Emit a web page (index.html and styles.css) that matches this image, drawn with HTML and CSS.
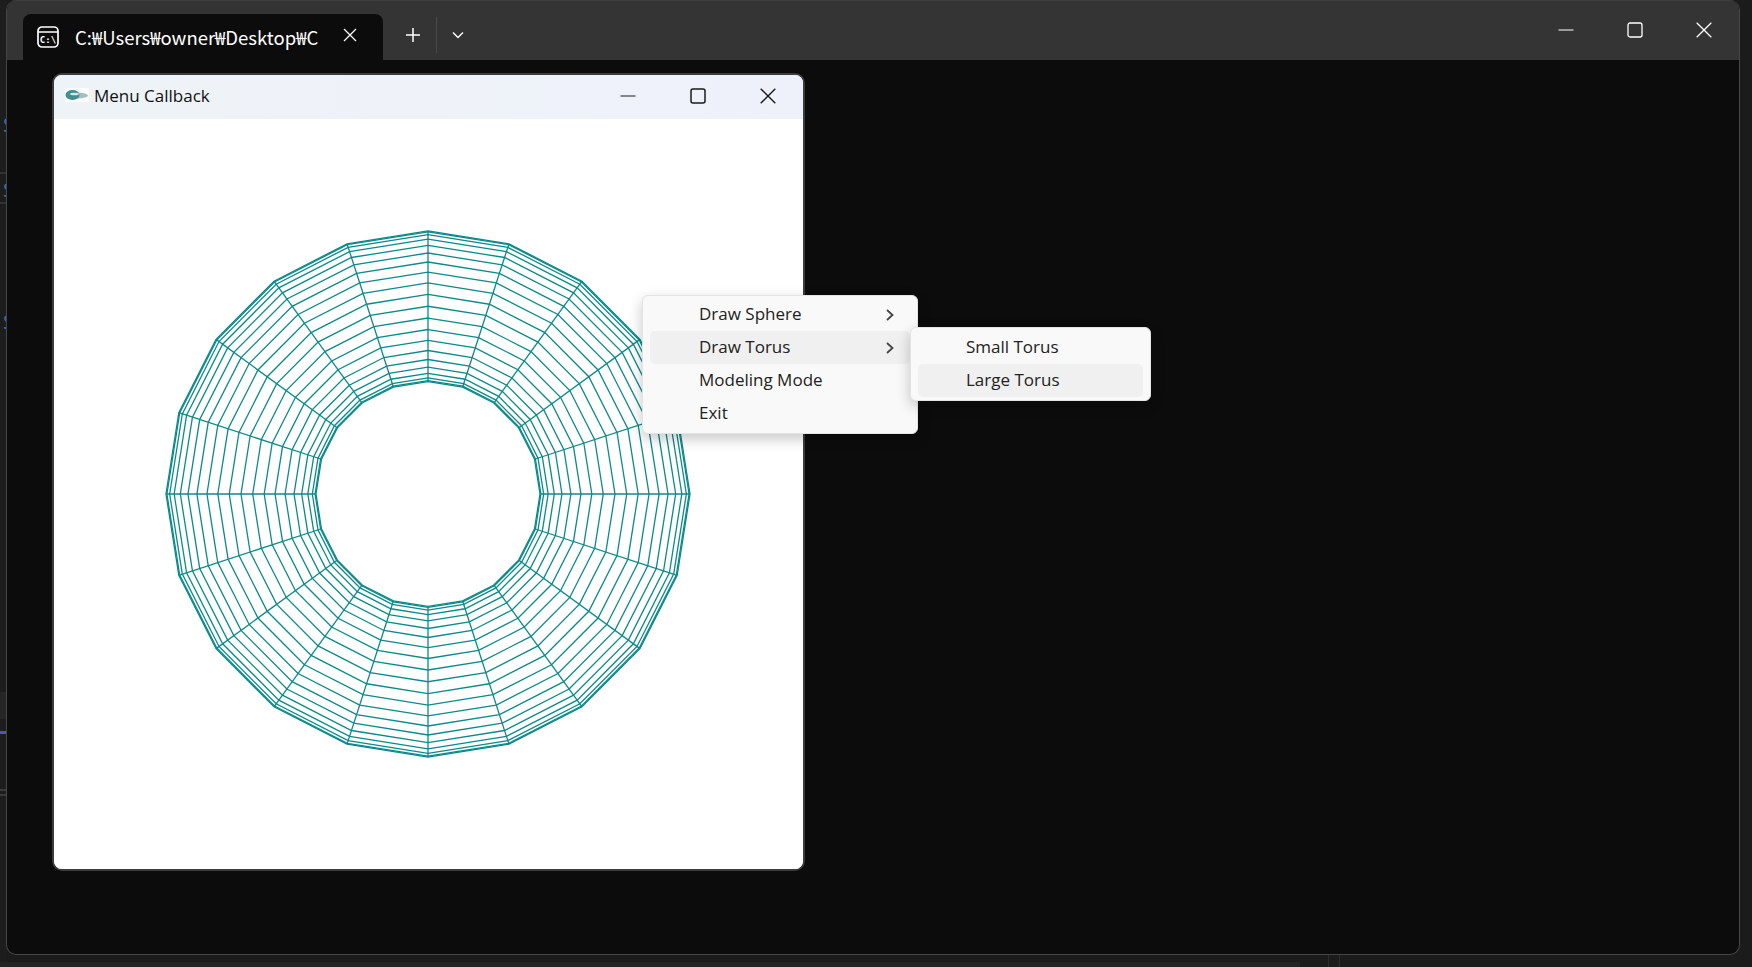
FILE: index.html
```html
<!DOCTYPE html>
<html lang="en">
<head>
<meta charset="utf-8">
<title>Menu Callback</title>
<link rel="stylesheet" href="styles.css">
</head>
<body>
<div class="desktop">
  <div class="strip">
    <span class="strip-s s1">S</span>
    <span class="strip-s s2">S</span>
    <span class="strip-s s3">S</span>
    <i class="band b1"></i><i class="band b2"></i><i class="band b3"></i>
    <i class="band b4"></i><i class="band b5"></i><i class="band b6"></i>
  </div>
  <div class="floor"><i class="floor-block"></i><i class="floor-line l1"></i><i class="floor-line l2"></i></div>

  <section class="terminal">
    <header class="term-bar">
      <div class="tab">
        <svg class="tab-icon" viewBox="0 0 22 22" width="22" height="22">
          <rect x="1" y="1" width="20" height="20" rx="4" fill="none" stroke="#fff" stroke-width="1.700"/>
          <path d="M1 6h20" stroke="#fff" stroke-width="1.700"/>
          <text x="11" y="17" class="tab-icon-text" text-anchor="middle">C:\</text>
        </svg>
        <span class="tab-title">C:₩Users₩owner₩Desktop₩C</span>
        <svg class="tab-close" viewBox="0 0 14 14" width="14" height="14"><path d="M1 1l12 12M13 1L1 13" stroke="#fff" stroke-width="1.300" fill="none"/></svg>
      </div>
      <div class="tab-actions">
        <svg viewBox="0 0 16 16" width="16" height="16"><path d="M8 1v14M1 8h14" stroke="#fff" stroke-width="1.500" fill="none"/></svg>
        <i class="tab-sep"></i>
        <svg viewBox="0 0 12 8" width="12" height="8"><path d="M1 1.500l5 5 5-5" stroke="#fff" stroke-width="1.400" fill="none"/></svg>
      </div>
      <div class="controls">
        <span class="ctl"><svg viewBox="0 0 16 16" width="16" height="16"><path d="M0.500 8h15" stroke="#fff" stroke-width="1.200" fill="none"/></svg></span>
        <span class="ctl"><svg viewBox="0 0 16 16" width="16" height="16"><rect x="1" y="1" width="14" height="14" rx="2" stroke="#fff" stroke-width="1.300" fill="none"/></svg></span>
        <span class="ctl"><svg viewBox="0 0 16 16" width="16" height="16"><path d="M0.700 0.700l14.600 14.600M15.300 0.700L0.700 15.300" stroke="#fff" stroke-width="1.300" fill="none"/></svg></span>
      </div>
    </header>
  </section>

  <section class="glut">
    <header class="glut-bar">
      <svg class="glut-icon" viewBox="0 0 24 14" width="24" height="14">
        <rect width="24" height="14" fill="#fbfcfc"/>
        <ellipse cx="13" cy="7.500" rx="10" ry="3" fill="#a9bcc0"/>
        <ellipse cx="7.500" cy="7" rx="7" ry="5" fill="#3f8f92"/>
        <ellipse cx="9.500" cy="6" rx="4.500" ry="1.300" fill="#d5e6e6"/>
      </svg>
      <span class="glut-title">Menu Callback</span>
      <div class="controls">
        <span class="ctl"><svg viewBox="0 0 16 16" width="16" height="16"><path d="M0.500 8h15" stroke="#1a1a1a" stroke-width="1.200" fill="none"/></svg></span>
        <span class="ctl"><svg viewBox="0 0 16 16" width="16" height="16"><rect x="1" y="1" width="14" height="14" rx="2" stroke="#1a1a1a" stroke-width="1.500" fill="none"/></svg></span>
        <span class="ctl"><svg viewBox="0 0 16 16" width="16" height="16"><path d="M0.700 0.700l14.600 14.600M15.300 0.700L0.700 15.300" stroke="#1a1a1a" stroke-width="1.400" fill="none"/></svg></span>
      </div>
    </header>
    <div class="glut-body">
      <svg id="torus" class="torus" viewBox="0 0 749 750" width="749" height="750"></svg>
    </div>
  </section>

  <nav class="menu menu-main">
    <div class="row"><span>Draw Sphere</span><svg class="chev" viewBox="0 0 8 12" width="8" height="12"><path d="M1 1l5.500 5L1 11" stroke="#444" stroke-width="1.800" fill="none"/></svg></div>
    <div class="row hot"><span>Draw Torus</span><svg class="chev" viewBox="0 0 8 12" width="8" height="12"><path d="M1 1l5.500 5L1 11" stroke="#444" stroke-width="1.800" fill="none"/></svg></div>
    <div class="row"><span>Modeling Mode</span></div>
    <div class="row"><span>Exit</span></div>
  </nav>
  <nav class="menu menu-sub">
    <div class="row"><span>Small Torus</span></div>
    <div class="row hot"><span>Large Torus</span></div>
  </nav>
</div>
<script src="script.js"></script>
</body>
</html>
```

FILE: styles.css
```css
* { box-sizing: border-box; }
html, body { margin: 0; height: 100%; overflow: hidden; background: #1b1b1b; }
.desktop { position: relative; width: 1752px; height: 967px; overflow: hidden; background: #1b1b1b; font-family: "Open Sans", "Noto Sans", sans-serif; }

.strip { position: absolute; left: 0; top: 0; width: 7px; height: 967px; overflow: hidden; background: #1d1d1d; }
.strip-s { position: absolute; left: 3px; font: 20px "Open Sans", sans-serif; color: #3f6c9c; line-height: 20px; }
.s1 { top: 115px; } .s2 { top: 180px; } .s3 { top: 312px; }
.band { position: absolute; left: 0; width: 7px; height: 2px; background: #333; }
.b1 { top: 172px; } .b2 { top: 202px; }
.b3 { top: 692px; height: 27px; background: #262626; }
.b4 { top: 731px; height: 3px; background: #5a4fc0; }
.b5 { top: 789px; background: #3a3a3a; }
.b6 { top: 794px; background: #3a3a3a; }

.floor { position: absolute; left: 0; right: 0; top: 955px; height: 12px; }
.floor-block { position: absolute; left: 0; width: 1300px; top: 7px; height: 5px; background: #232323; }
.floor-line { position: absolute; top: 0; width: 1px; height: 12px; background: #2e2e2e; }
.l1 { left: 1328px; } .l2 { left: 1339px; }

.terminal { position: absolute; left: 6px; top: 0; width: 1734px; height: 955px; background: #0c0c0c; border: 1.5px solid #474747; border-top: 0; border-radius: 10px; overflow: hidden; }
.term-bar { display: flex; align-items: flex-end; height: 60px; background: #343434; border-top: 1px solid #3e3e3e; }
.tab { display: flex; align-items: center; width: 360px; height: 46px; margin-left: 16px; background: #0c0c0c; border-radius: 8px 8px 0 0; padding-left: 14px; color: #fff; }
.tab-icon { flex: none; }
.tab-icon-text { font: bold 9px "DejaVu Sans Mono", monospace; fill: #fff; }
.tab-title { flex: none; width: 245px; margin-left: 16px; overflow: hidden; white-space: nowrap; font: 18.500px "Noto Sans CJK KR", "Noto Sans", sans-serif; margin-top: -1px; }
.tab-close { flex: none; margin-left: 23px; margin-top: -4px; }
.tab-actions { display: flex; align-items: center; height: 46px; margin-left: 22px; padding-bottom: 4px; }
.tab-sep { width: 1px; height: 36px; background: #4a4a4a; margin: 0 15px 0 15px; }
.controls { display: flex; margin-left: auto; align-self: center; }
.ctl { display: flex; width: 69px; height: 40px; align-items: center; justify-content: center; }
.term-bar .controls { padding-right: 1px; margin-top: -2px; }

.glut { position: absolute; left: 52px; top: 73px; width: 753px; height: 798px; display: flex; flex-direction: column; background: #fff; border: 2px solid #3c3c3c; border-radius: 10px; overflow: hidden; }
.glut-bar { display: flex; align-items: center; flex: none; height: 44px; background: linear-gradient(90deg, #eef3f7, #eef1fa); padding: 0 0 3px 11px; }
.glut-icon { flex: none; margin-top: -2px; }
.glut-title { margin-left: 5px; font-size: 17px; color: #111; }
.glut-bar .ctl { width: 68px; }
.glut-bar .ctl:nth-child(2) { width: 71px; }
.glut-bar .ctl:last-child { width: 70px; }
.glut-body { flex: 1; background: #fff; }
.torus { display: block; }
.torus polygon, .torus line { fill: none; stroke: #0b8a8a; stroke-width: 1.300; }

.menu { position: absolute; background: #f9f9f9; border: 1px solid #e4e4e4; border-radius: 6px; box-shadow: 0 5px 14px rgba(0,0,0,.22); font-size: 17px; color: #222; }
.menu-main { left: 642px; top: 295px; width: 276px; padding: 2px 7px 3px; }
.menu-sub { left: 910px; top: 327px; width: 241px; padding: 3px 7px; }
.row { display: flex; align-items: center; justify-content: space-between; height: 33px; padding: 0 16px 2px 49px; border-radius: 5px; }
.row.hot { background: #f0f0f0; }
.chev { flex: none; margin-top: 3px; }
.menu-sub .row { padding-left: 48px; }
```

FILE: script.js
```js
var NS = 'http://www.w3.org/2000/svg';
var svg = document.getElementById('torus');
var cx = 374, cy = 375, SY = 1.004, R = 187, r = 75, RINGS = 20, SIDES = 40;

function pt(rad, k) {
  var a = k * 2 * Math.PI / RINGS;
  return [cx + rad * Math.sin(a), cy - SY * rad * Math.cos(a)];
}
for (var s = 0; s <= SIDES / 2; s++) {
  var rad = R + r * Math.cos(s * 2 * Math.PI / SIDES);
  var pts = [];
  for (var k = 0; k < RINGS; k++) pts.push(pt(rad, k).map(function (v) { return v.toFixed(2); }).join(','));
  var p = document.createElementNS(NS, 'polygon');
  p.setAttribute('points', pts.join(' '));
  svg.appendChild(p);
}
for (var k = 0; k < RINGS; k++) {
  var a = pt(R + r, k), b = pt(R - r, k);
  var l = document.createElementNS(NS, 'line');
  l.setAttribute('x1', a[0]); l.setAttribute('y1', a[1]);
  l.setAttribute('x2', b[0]); l.setAttribute('y2', b[1]);
  svg.appendChild(l);
}
```
